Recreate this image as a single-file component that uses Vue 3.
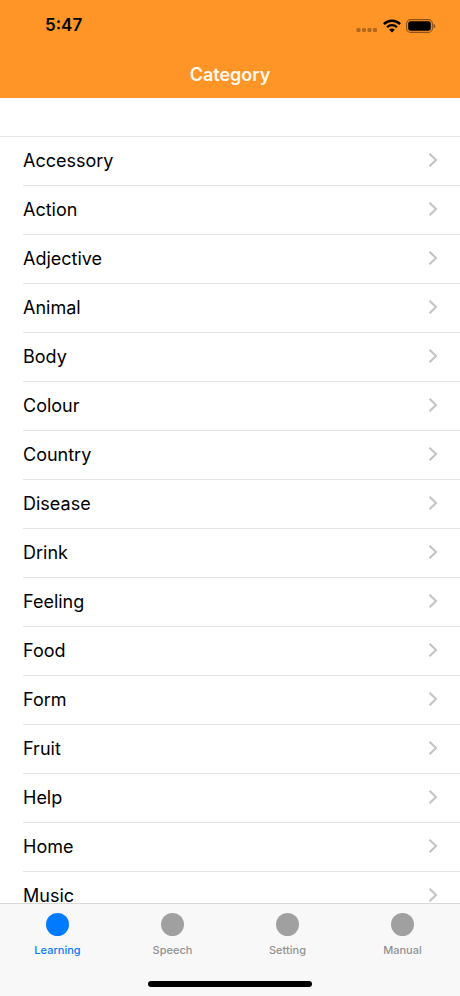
<script setup>
import { ref } from 'vue'

const categories = [
  'Accessory', 'Action', 'Adjective', 'Animal', 'Body', 'Colour', 'Country', 'Disease',
  'Drink', 'Feeling', 'Food', 'Form', 'Fruit', 'Help', 'Home', 'Music',
]
const tabs = ['Learning', 'Speech', 'Setting', 'Manual']
const active = ref('Learning')
</script>

<template>
  <div class="app">
    <header class="header">
      <div class="status">
        <time class="clock">5:47</time>
        <div class="indicators">
          <svg class="cell" width="22" height="4" viewBox="0 0 22 4" aria-hidden="true">
            <rect x="0.5" width="4" height="4" rx="1.2" />
            <rect x="6" width="4" height="4" rx="1.2" />
            <rect x="11.5" width="4" height="4" rx="1.2" />
            <rect x="17" width="4" height="4" rx="1.2" />
          </svg>
          <svg width="18" height="14" viewBox="0 0 18 14" aria-hidden="true">
            <g fill="none" stroke="#000" stroke-width="2.3">
              <path d="M0.9 5.1 C5.4 0.6 12.6 0.6 17.1 5.1" />
              <path d="M4 8.3 C6.8 5.5 11.2 5.5 14 8.3" />
            </g>
            <path d="M9 13.4 L6.2 10.7 C7.7 9.1 10.3 9.1 11.8 10.7 Z" />
          </svg>
          <svg width="30" height="14" viewBox="0 0 30 14" aria-hidden="true">
            <rect x="0.6" y="0.6" width="25.8" height="12.8" rx="4" fill="none" stroke="#000" stroke-opacity="0.45" stroke-width="1.1" />
            <rect x="2.2" y="2.2" width="22.6" height="9.6" rx="2.4" />
            <path d="M27.6 4.7 C29.7 5.6 29.7 8.4 27.6 9.3 Z" fill-opacity="0.5" />
          </svg>
        </div>
      </div>
      <h1 class="title">Category</h1>
    </header>

    <main class="content">
      <ul class="list">
        <li v-for="name in categories" :key="name" class="item">
          <a class="link" href="#">
            <span>{{ name }}</span>
            <svg width="10" height="16" viewBox="0 0 10 16" aria-hidden="true">
              <path d="M1.5 1.8 L8 8 L1.5 14.2" fill="none" stroke="#c4c4c6" stroke-width="2.1" />
            </svg>
          </a>
        </li>
      </ul>
    </main>

    <footer class="footer">
      <nav class="tabs">
        <button
          v-for="tab in tabs"
          :key="tab"
          type="button"
          class="tab"
          :class="{ active: tab === active }"
          @click="active = tab"
        >
          <span class="dot"></span>
          <span>{{ tab }}</span>
        </button>
      </nav>
      <div class="home"></div>
    </footer>
  </div>
</template>

<style>
body {
  margin: 0;
}
</style>

<style scoped>
.app {
  display: flex;
  flex-direction: column;
  height: 100vh;
  overflow: hidden;
  background: #fff;
  color: #000;
  font-family: Inter, "Liberation Sans", sans-serif;
}
.header {
  flex: none;
  background: #ff9427;
}
.status {
  display: flex;
  align-items: center;
  justify-content: space-between;
  height: 51px;
  padding: 0 24px 0 45px;
}
.clock {
  font-size: 17px;
  font-weight: 600;
  line-height: 21px;
}
.indicators {
  display: flex;
  align-items: center;
  gap: 5px;
}
.cell {
  align-self: flex-end;
  margin-bottom: 1px;
  fill: #000;
  fill-opacity: 0.3;
}
.title {
  margin: 0;
  height: 47px;
  line-height: 47px;
  text-align: center;
  font-size: 18px;
  font-weight: 600;
  color: #fffaf0;
}
.content {
  flex: 1;
  min-height: 0;
  overflow: hidden;
  padding-top: 38px;
}
.list {
  margin: 0;
  padding: 0;
  list-style: none;
  border-top: 1px solid #e6e6e6;
}
.item {
  padding-left: 23px;
}
.link {
  display: flex;
  align-items: center;
  justify-content: space-between;
  height: 46px;
  padding: 0 22px 2px 0;
  border-bottom: 1px solid #e4e4e5;
  color: inherit;
  font-size: 18px;
  text-decoration: none;
}
.footer {
  flex: none;
  display: flex;
  flex-direction: column;
  align-items: center;
  justify-content: space-between;
  height: 93px;
  padding-bottom: 9px;
  box-sizing: border-box;
  border-top: 1px solid #d8d8d8;
  background: #f8f8f8;
}
.tabs {
  display: flex;
  width: 100%;
}
.tab {
  flex: 1;
  display: flex;
  flex-direction: column;
  align-items: center;
  gap: 7px;
  padding: 9px 0 0;
  border: 0;
  background: none;
  color: #929292;
  font-family: inherit;
  font-size: 11px;
  font-weight: 500;
  line-height: 14px;
}
.dot {
  width: 23px;
  height: 23px;
  border-radius: 50%;
  background: #a0a0a0;
}
.active {
  color: #087cff;
}
.active .dot {
  background: #007aff;
}
.home {
  width: 164px;
  height: 6px;
  border-radius: 3px;
  background: #000;
}
</style>
